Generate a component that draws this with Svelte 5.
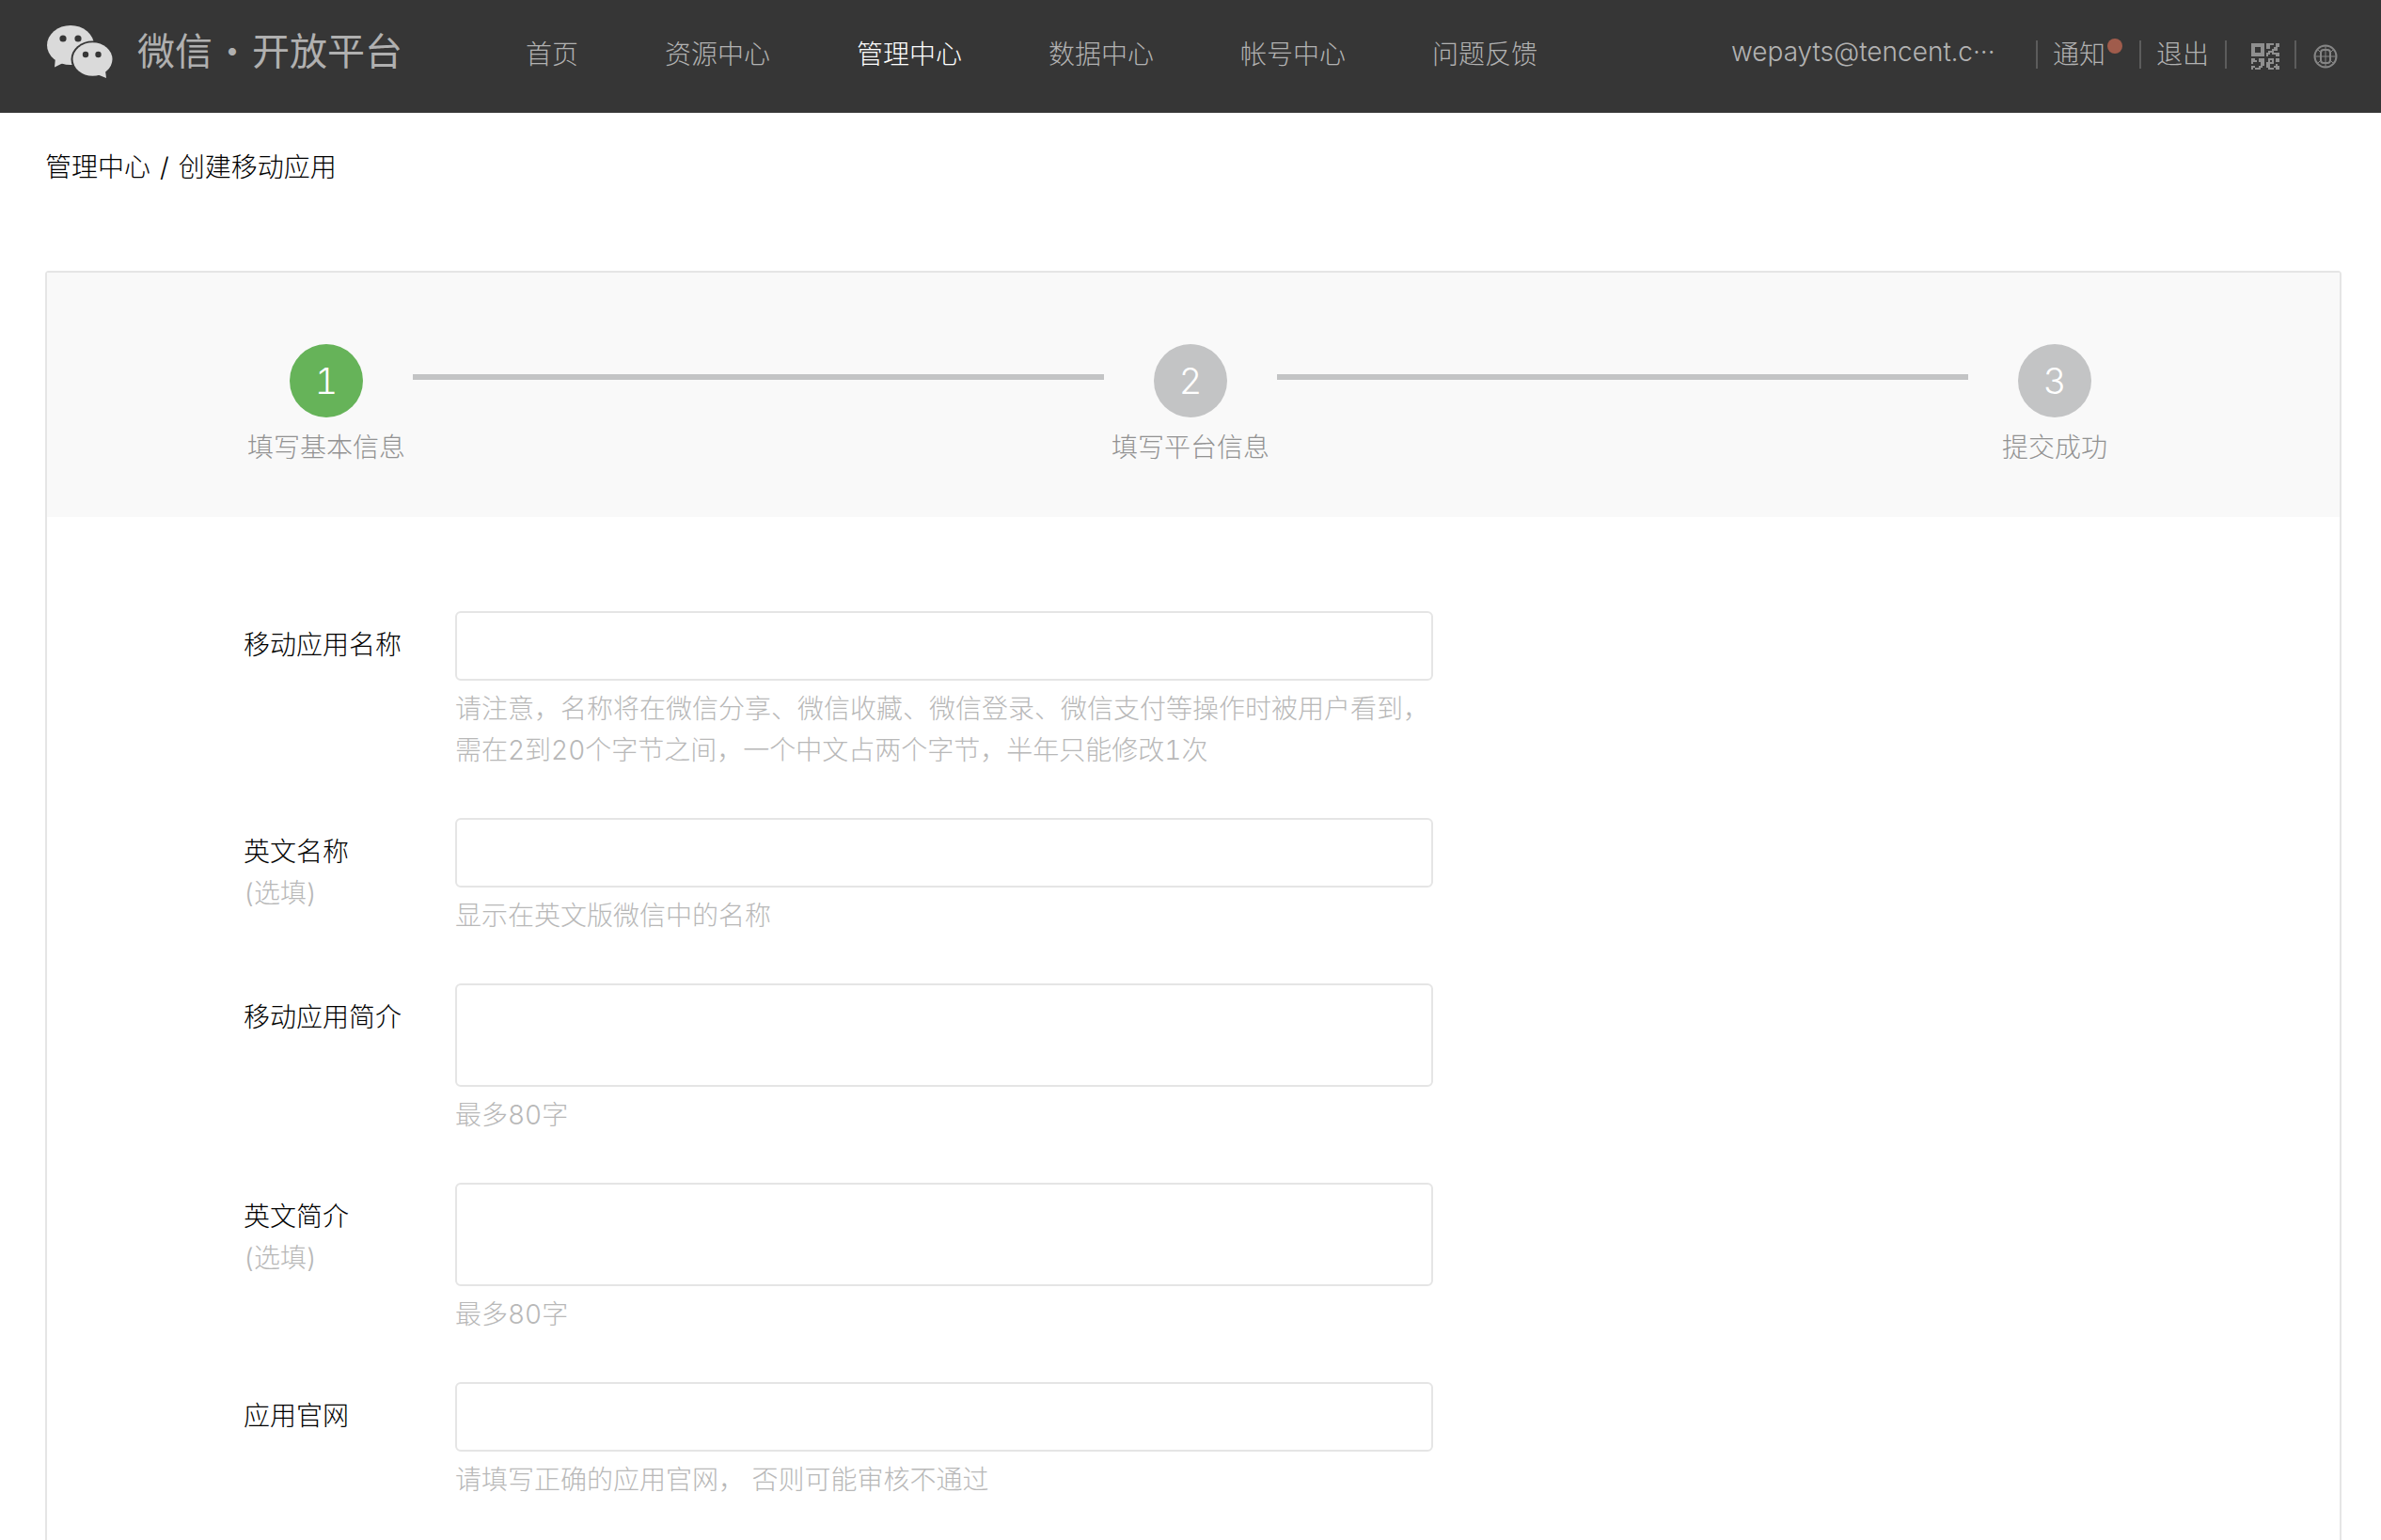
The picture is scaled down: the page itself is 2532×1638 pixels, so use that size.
<script lang="ts">
  interface Field {
    id: string;
    label: string;
    optional?: boolean;
    multiline?: boolean;
    hint: string[];
  }

  const nav = ['首页', '资源中心', '管理中心', '数据中心', '帐号中心', '问题反馈'];
  const activeNav = '管理中心';

  const steps = ['填写基本信息', '填写平台信息', '提交成功'];
  let currentStep = $state(0);

  const fields: Field[] = [
    {
      id: 'name',
      label: '移动应用名称',
      hint: [
        '请注意，名称将在微信分享、微信收藏、微信登录、微信支付等操作时被用户看到，',
        '需在2到20个字节之间，一个中文占两个字节，半年只能修改1次',
      ],
    },
    { id: 'name-en', label: '英文名称', optional: true, hint: ['显示在英文版微信中的名称'] },
    { id: 'intro', label: '移动应用简介', multiline: true, hint: ['最多80字'] },
    { id: 'intro-en', label: '英文简介', optional: true, multiline: true, hint: ['最多80字'] },
    { id: 'site', label: '应用官网', hint: ['请填写正确的应用官网， 否则可能审核不通过'] },
  ];

  let values: Record<string, string> = $state({ name: '', 'name-en': '', intro: '', 'intro-en': '', site: '' });
</script>

<div class="page">
  <header class="header">
    <a class="brand" href="#home">
      <svg class="brand-icon" viewBox="0 0 70 56" aria-hidden="true">
        <g fill="#dadada">
          <ellipse cx="25" cy="21" rx="25" ry="21" />
          <path d="M9 34L8 44.5 18 39.5 28 42V34z" />
        </g>
        <ellipse cx="48.5" cy="36" rx="23" ry="19.5" fill="#363636" />
        <g fill="#dadada">
          <ellipse cx="48.5" cy="36" rx="21" ry="17.8" />
          <path d="M53 52l10 4-1-8z" />
        </g>
        <g fill="#363636">
          <circle cx="17" cy="14" r="3.6" />
          <circle cx="33" cy="14" r="3.6" />
          <circle cx="41" cy="31" r="3.2" />
          <circle cx="54.5" cy="31" r="3.2" />
        </g>
      </svg>
      <span class="brand-name">微信<span class="brand-dot">·</span>开放平台</span>
    </a>

    <nav class="nav">
      {#each nav as item}
        <a href="#{item}" class:active={item === activeNav}>{item}</a>
      {/each}
    </nav>

    <div class="account">
      <span class="email">wepayts@tencent.c···</span>
      <a class="notice" href="#notice">通知<i class="badge"></i></a>
      <a class="logout" href="#logout">退出</a>
      <a class="qr" href="#qr" aria-label="二维码">
        <svg width="30" height="28" viewBox="0 0 30 28" aria-hidden="true">
          <path
            fill="#8f8f8f"
            fill-rule="evenodd"
            d="M0 0h14v14H0zM4 4v6h6V4zM16 0h8v2h-4v4h-4zM26 0h4v4h-2v4h-4V4h2zM22 6h2v4h6v4h-4v-2h-4v-2h-2v2h-2v2h-2v-4h2V8h4zM0 16h4v2h2v2H2v2H0zM8 16h6v8h-2v2h-2v2H4v-2h4v-2h2v-4H8zM0 24h4v2H2v2H0zM18 16h6v6h-4v4h-4v-6h2zM26 16h4v4h-4zM26 22h2v2h2v4h-4v-2h-2v-2h2zM18 26h6v2h-6zM20 18v2h2v-2z"
          />
        </svg>
      </a>
      <a class="lang" href="#lang" aria-label="语言">
        <svg width="26" height="26" viewBox="0 0 26 26" fill="none" stroke="#858585" stroke-width="2" aria-hidden="true">
          <circle cx="13" cy="13" r="11.5" />
          <rect x="8" y="6" width="10" height="14" rx="3" />
          <path d="M13 2v22M2 13h22M5 6l3 3M21 6l-3 3M5 20l3-3M21 20l-3-3" stroke-width="1" />
        </svg>
      </a>
    </div>
  </header>

  <main class="main">
    <div class="breadcrumb">
      <a href="#manage">管理中心</a>
      <span>/</span>
      <span>创建移动应用</span>
    </div>

    <section class="panel">
      <ol class="steps">
        {#each steps as step, i}
          {#if i > 0}
            <li class="step-line" aria-hidden="true"></li>
          {/if}
          <li class="step" class:current={i === currentStep}>
            <span class="step-num">{i + 1}</span>
            <span class="step-label">{step}</span>
          </li>
        {/each}
      </ol>

      <form class="form">
        {#each fields as field}
          <div class="row">
            <label for={field.id}>
              {field.label}
              {#if field.optional}
                <span class="optional">(选填)</span>
              {/if}
            </label>
            <div class="control">
              {#if field.multiline}
                <textarea id={field.id} bind:value={values[field.id]}></textarea>
              {:else}
                <input id={field.id} type="text" bind:value={values[field.id]} />
              {/if}
              <div class="hint">
                {#each field.hint as line}
                  <p>{line}</p>
                {/each}
              </div>
            </div>
          </div>
        {/each}
      </form>
    </section>
  </main>
</div>

<style>
  :global(body) {
    margin: 0;
    background: #fff;
  }
  .page {
    display: flex;
    flex-direction: column;
    min-height: 100vh;
    font-family: Inter, 'Noto Sans CJK SC', sans-serif;
    font-size: 28px;
    font-weight: 300;
    font-variant-numeric: tabular-nums;
    line-height: 44px;
    color: #000;
  }
  a {
    color: inherit;
    text-decoration: none;
  }

  .header {
    display: flex;
    align-items: center;
    box-sizing: border-box;
    height: 120px;
    padding: 0 46px 4px 50px;
    background: #363636;
    color: #b2b2b2;
    white-space: nowrap;
  }
  .brand {
    display: flex;
    align-items: center;
    gap: 26px;
    padding-bottom: 6px;
  }
  .brand-icon {
    width: 70px;
    height: 56px;
  }
  .brand-name {
    font-size: 40px;
    font-weight: 400;
    color: #b0b0b0;
  }
  .brand-dot {
    display: inline-block;
    width: 42px;
    font-weight: 900;
    text-align: center;
  }
  .nav {
    display: flex;
    gap: 92px;
    margin-left: 131px;
  }
  .nav .active {
    color: #fff;
  }

  .account {
    display: flex;
    align-items: center;
    margin-left: auto;
  }
  .account a {
    display: flex;
    align-items: center;
    height: 30px;
    border-left: 2px solid #5c5c5c;
  }
  .email {
    width: 324px;
    padding-bottom: 6px;
  }
  .notice {
    position: relative;
    padding: 0 36px 0 16px;
  }
  .badge {
    position: absolute;
    top: -2px;
    right: 18px;
    width: 16px;
    height: 16px;
    border-radius: 50%;
    background: #a05c4c;
  }
  .logout {
    padding: 0 17px 0 16px;
  }
  .qr svg,
  .lang svg {
    margin-top: 4px;
  }
  .qr {
    padding: 0 16px 0 26px;
  }
  .lang {
    padding-left: 18px;
  }

  .main {
    display: flex;
    flex: 1;
    flex-direction: column;
    padding: 0 42px 0 48px;
  }
  .breadcrumb {
    display: flex;
    gap: 10px;
    padding: 36px 0 88px;
  }
  .panel {
    flex: 1;
    border: 2px solid #e5e5e5;
    border-bottom: 0;
    border-radius: 4px 4px 0 0;
  }

  .steps {
    display: flex;
    margin: 0;
    padding: 76px 219px 52px 213px;
    background: #f9f9f9;
    list-style: none;
  }
  .step {
    display: flex;
    flex-direction: column;
    align-items: center;
    gap: 10px;
    width: 168px;
    color: #929292;
  }
  .step-num {
    width: 78px;
    height: 78px;
    border-radius: 50%;
    background: #c3c4c5;
    color: #fff;
    font-size: 38px;
    line-height: 78px;
    text-align: center;
  }
  .current .step-num {
    background: #66b359;
  }
  .step-line {
    flex: 1;
    height: 6px;
    margin: 32px 8px 0;
    background: #c3c4c5;
  }

  .form {
    display: flex;
    flex-direction: column;
    gap: 50px;
    padding: 100px 210px 40px 209px;
  }
  .row {
    display: flex;
  }
  label {
    flex: none;
    width: 225px;
    padding-top: 14px;
  }
  .optional {
    display: block;
    color: #b8b8b8;
  }
  .control {
    flex: 0 1 1040px;
  }
  input,
  textarea {
    display: block;
    box-sizing: border-box;
    width: 100%;
    height: 74px;
    padding: 12px 20px;
    border: 2px solid #e5e5e5;
    border-radius: 6px;
    outline: none;
    background: #fff;
    color: #222;
    font: inherit;
    resize: none;
  }
  textarea {
    height: 110px;
  }
  .hint {
    padding-top: 8px;
    color: #b8b8b8;
  }
  .hint p {
    margin: 0;
  }
</style>
